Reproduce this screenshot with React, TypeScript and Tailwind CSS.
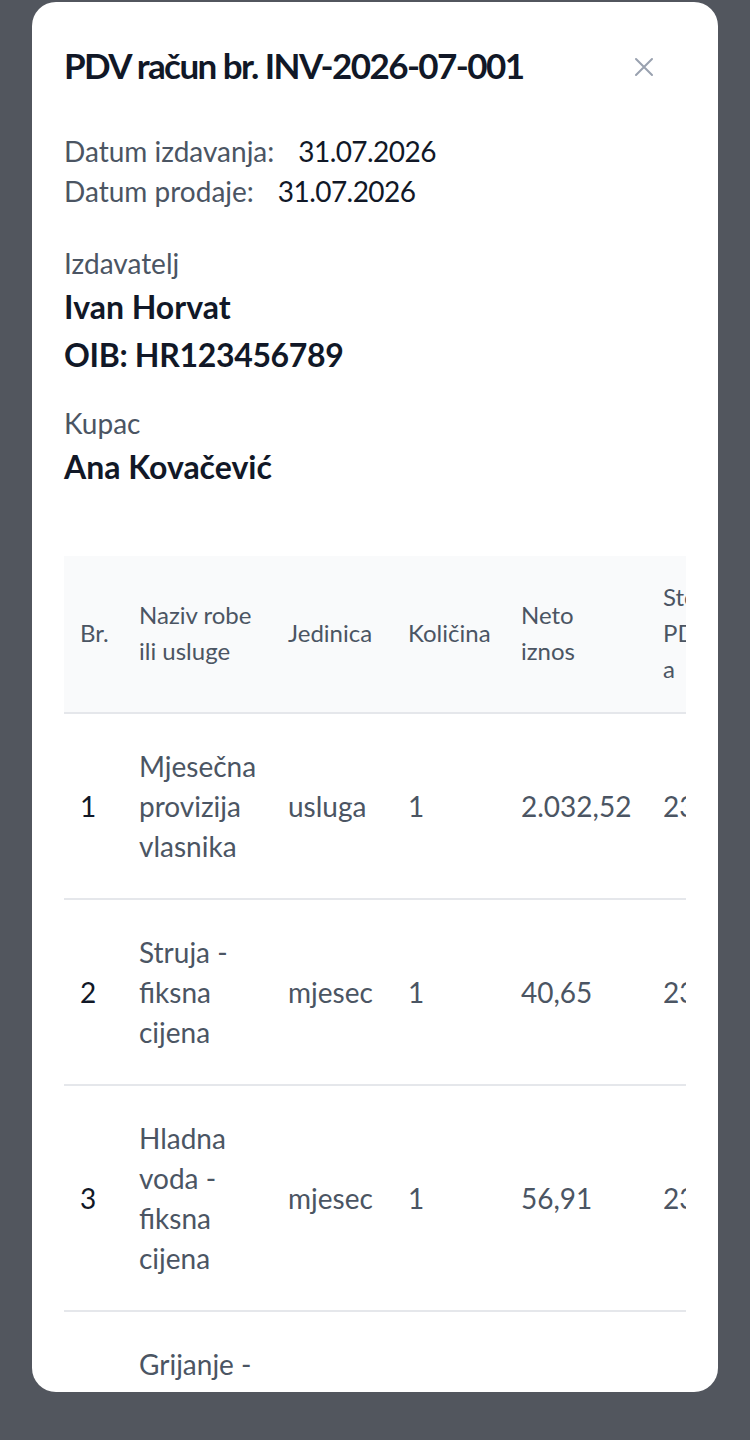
import React from "react";

type Row = {
  no: string;
  name: string;
  unit: string;
  qty: string;
  net: string;
  rate: string;
  vat: string;
  total: string;
};

const rows: Row[] = [
  { no: "1", name: "Mjesečna provizija vlasnika", unit: "usluga", qty: "1", net: "2.032,52", rate: "23%", vat: "467,48", total: "2.500,00" },
  { no: "2", name: "Struja - fiksna cijena", unit: "mjesec", qty: "1", net: "40,65", rate: "23%", vat: "9,35", total: "50,00" },
  { no: "3", name: "Hladna voda - fiksna cijena", unit: "mjesec", qty: "1", net: "56,91", rate: "23%", vat: "13,09", total: "70,00" },
  { no: "4", name: "Grijanje - fiksna cijena", unit: "mjesec", qty: "1", net: "81,30", rate: "23%", vat: "18,70", total: "100,00" },
];

const headers = [
  { label: "Br.", w: "w-[59px]" },
  { label: "Naziv robe ili usluge", w: "w-[149px]" },
  { label: "Jedinica", w: "w-[120px]" },
  { label: "Količina", w: "w-[113px]" },
  { label: "Neto iznos", w: "w-[142px]" },
  { label: "Stopa PDV-a", w: "w-[100px]" },
  { label: "Iznos PDV-a", w: "w-[140px]" },
  { label: "Ukupno", w: "w-[140px]" },
];

const App = () => {
  return (
    <div className="min-h-screen h-[1440px] bg-[#52565e] px-8 pt-[2px] font-['Lato','Liberation_Sans',sans-serif]">
      <div className="h-[1390px] overflow-hidden rounded-3xl bg-white px-8 pt-[35px]">
        {/* Header */}
        <div className="flex items-center justify-between">
          <h2 className="text-[35px] leading-[56px] font-bold tracking-[-0.045em] text-[#111827]">
            PDV račun br. INV-2026-07-001
          </h2>
          <button className="mr-[26px] mt-1 text-gray-400" aria-label="Zatvori">
            <svg width="32" height="32" viewBox="0 0 24 24" fill="none" stroke="currentColor" strokeWidth="1.5" strokeLinecap="round">
              <path d="M6 18L18 6M6 6l12 12" />
            </svg>
          </button>
        </div>

        {/* Dates */}
        <div className="mt-[38px] text-[28px] leading-[40px]">
          <div className="flex gap-6">
            <span className="text-[#4b5563]">Datum izdavanja:</span>
            <span className="tracking-[-0.02em] text-[#111827]">31.07.2026</span>
          </div>
          <div className="flex gap-6">
            <span className="text-[#4b5563]">Datum prodaje:</span>
            <span className="tracking-[-0.02em] text-[#111827]">31.07.2026</span>
          </div>
        </div>

        {/* Parties */}
        <div className="mt-8">
          <p className="text-[28px] leading-[40px] text-[#4b5563]">Izdavatelj</p>
          <p className="text-[32px] leading-[48px] font-bold text-[#111827]">Ivan Horvat</p>
          <p className="text-[32px] leading-[48px] font-bold tracking-[-0.01em] text-[#111827]">OIB: HR123456789</p>
        </div>
        <div className="mt-6">
          <p className="text-[28px] leading-[40px] text-[#4b5563]">Kupac</p>
          <p className="text-[32px] leading-[48px] font-bold text-[#111827]">Ana Kovačević</p>
        </div>

        {/* Items */}
        <div className="mt-[65px] overflow-hidden">
          <table className="w-[963px] table-fixed border-collapse text-left">
            <thead className="bg-[#f9fafb]">
              <tr className="border-b-2 border-[#e5e7eb]">
                {headers.map((h) => (
                  <th
                    key={h.label}
                    className={`${h.w} px-4 pt-[23px] pb-[25px] align-middle text-[24px] leading-[36px] font-normal text-[#4b5563]`}
                  >
                    {h.label}
                  </th>
                ))}
              </tr>
            </thead>
            <tbody className="text-[28px] leading-[40px] text-[#4b5563]">
              {rows.map((r) => (
                <tr key={r.no} className="border-b-2 border-[#e5e7eb]">
                  <td className="px-4 py-8 align-middle text-[#111827]">{r.no}</td>
                  <td className="px-4 py-8 align-middle">{r.name}</td>
                  <td className="px-4 py-8 align-middle">{r.unit}</td>
                  <td className="px-4 py-8 align-middle">{r.qty}</td>
                  <td className="px-4 py-8 align-middle">{r.net}</td>
                  <td className="px-4 py-8 align-middle">{r.rate}</td>
                  <td className="px-4 py-8 align-middle">{r.vat}</td>
                  <td className="px-4 py-8 align-middle">{r.total}</td>
                </tr>
              ))}
            </tbody>
          </table>
        </div>
      </div>
    </div>
  );
};

export default App;
